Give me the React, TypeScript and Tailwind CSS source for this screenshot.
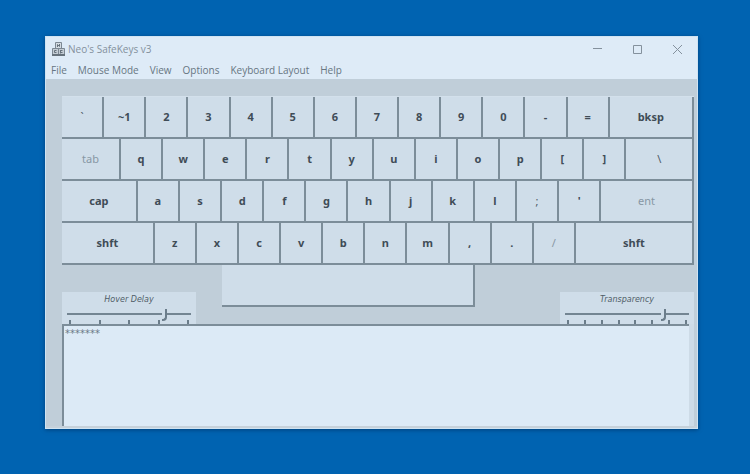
import { useState } from "react";
import { clsx } from "clsx";

type KeyDef = { label: string; units?: number; tone?: "bold" | "regular" | "faded" };

const ROW_UNITS = 15;

const plain = (labels: string): KeyDef[] => labels.split(" ").map((label) => ({ label }));

const rows: KeyDef[][] = [
  [{ label: "`", tone: "regular" }, ...plain("~1 2 3 4 5 6 7 8 9 0 - ="), { label: "bksp", units: 2 }],
  [
    { label: "tab", units: 1.4, tone: "faded" },
    ...plain("q w e r t y u i o p [ ]"),
    { label: "\\", units: 1.6, tone: "regular" },
  ],
  [
    { label: "cap", units: 1.8 },
    ...plain("a s d f g h j k l"),
    { label: ";", tone: "regular" },
    { label: "'" },
    { label: "ent", units: 2.2, tone: "faded" },
  ],
  [
    { label: "shft", units: 2.2 },
    ...plain("z x c v b n m , ."),
    { label: "/", tone: "faded" },
    { label: "shft", units: 2.8 },
  ],
];

const menus = ["File", "Mouse Mode", "View", "Options", "Keyboard Layout", "Help"];

function Key({ label, units = 1, tone = "bold", onPress }: KeyDef & { onPress: () => void }) {
  return (
    <button
      type="button"
      aria-label={label === " " ? "space" : undefined}
      onClick={onPress}
      style={{ width: `${(units / ROW_UNITS) * 100}%` }}
      className={clsx(
        "h-[42px] min-w-0 border-r-2 border-b-2 border-[#7c8d99] bg-[#cfdde9] text-[11px] leading-4",
        tone === "bold" && "font-bold text-[#3f4c57]",
        tone === "regular" && "text-[#4d5b67]",
        tone === "faded" && "text-[#8797a4]",
      )}
    >
      {label}
    </button>
  );
}

function SliderPanel({ id, label, ticks, value }: { id: string; label: string; ticks: number; value: number }) {
  return (
    <div className="flex h-8 w-[134px] shrink-0 flex-col bg-[#cfdde9]">
      <label
        htmlFor={id}
        className="h-4 text-center font-['DejaVu_Sans','Liberation_Sans',sans-serif] text-[8px] leading-4 text-[#4f5d68] italic"
      >
        {label}
      </label>
      <input
        id={id}
        type="range"
        defaultValue={value}
        className="mx-[5px] h-3 appearance-none bg-transparent [&::-webkit-slider-runnable-track]:h-[2px] [&::-webkit-slider-runnable-track]:bg-[#738592] [&::-webkit-slider-thumb]:-mt-1 [&::-webkit-slider-thumb]:h-3 [&::-webkit-slider-thumb]:w-[5px] [&::-webkit-slider-thumb]:appearance-none [&::-webkit-slider-thumb]:rounded-br [&::-webkit-slider-thumb]:border-r-2 [&::-webkit-slider-thumb]:border-b-2 [&::-webkit-slider-thumb]:border-[#6b7d8b] [&::-webkit-slider-thumb]:bg-[#cfdde9]"
      />
      <div className="flex h-1 justify-between px-[7px]">
        {Array.from({ length: ticks }, (_, i) => (
          <span key={i} className="w-[2px] bg-[#6b7d8a]" />
        ))}
      </div>
    </div>
  );
}

function AppIcon() {
  return (
    <svg viewBox="0 0 15 14" className="h-[14px] w-[15px]" fill="none" stroke="#7c8893" aria-hidden="true">
      <path d="M4.500 .5h6v6h-6z" fill="#d3dbe2" />
      <path d="M1.500 6.500h6v6h-6zM7.500 6.500h6v6h-6z" fill="#c3ccd4" />
      <path d="M1 13h13" stroke="#66727c" strokeWidth="2" />
      <path d="M6.500 5v-2.500l2 2v-2.500M5.500 8.500H3.500v2h2M9.500 8v3.500M11.500 8.500h-2M11.500 10.500h-2" stroke="#66727c" />
    </svg>
  );
}

export default function App() {
  const [text, setText] = useState("*******");
  const press = () => setText((t) => t + "*");

  return (
    <div className="min-h-screen bg-[#0063b1] pt-9 pr-[52px] pb-[44px] pl-[45px] font-['Noto_Sans','Open_Sans',sans-serif]">
      <main className="border border-[#cfe3f2] bg-[#c0ced9] shadow-[0_1px_4px_#00407a]">
        <header className="bg-[#deebf7] font-['Open_Sans','Noto_Sans',sans-serif]">
          <div className="flex h-6 items-center pl-[5px] text-[#84919d]">
            <AppIcon />
            <h1 className="ml-[2px] text-[10px] leading-6">Neo's SafeKeys v3</h1>
            <div className="ml-auto flex">
              <button type="button" aria-label="Minimize" className="flex w-10 justify-center">
                <svg viewBox="0 0 9 9" className="size-[9px]" stroke="currentColor" fill="none">
                  <path d="M0 3.500h9" />
                </svg>
              </button>
              <button type="button" aria-label="Maximize" className="flex w-10 justify-center">
                <svg viewBox="0 0 9 9" className="size-[9px]" stroke="currentColor" fill="none">
                  <path d="M.5.5h8v8h-8z" />
                </svg>
              </button>
              <button type="button" aria-label="Close" className="flex w-10 justify-center">
                <svg viewBox="0 0 9 9" className="size-[9px]" stroke="currentColor" fill="none">
                  <path d="m0 0 9 9M9 0 0 9" />
                </svg>
              </button>
            </div>
          </div>
          <nav className="flex h-[18px] gap-[11px] pl-[5px] text-[10px] leading-[18px] text-[#677682]">
            {menus.map((menu) => (
              <button key={menu} type="button">
                {menu}
              </button>
            ))}
          </nav>
        </header>

        <div className="pt-[17px] pr-[3px] pl-4">
          <div className="border-t border-[#d3e0eb]">
            {rows.map((row, r) => (
              <div key={r} className="flex">
                {row.map((key, k) => (
                  <Key key={k} {...key} onPress={press} />
                ))}
              </div>
            ))}
          </div>

          <div className="flex h-[59px]">
            <div className="flex grow-[3.8] basis-0 items-end">
              <SliderPanel id="hover-delay" label="Hover Delay" ticks={5} value={80} />
            </div>
            <Key label=" " units={6} onPress={press} />
            <div className="flex grow-[5.2] basis-0 items-end justify-end">
              <SliderPanel id="transparency" label="Transparency" ticks={8} value={81} />
            </div>
          </div>

          <div className="flex bg-[#cddbe7]">
            <textarea
              aria-label="Typed text"
              value={text}
              onChange={(e) => setText(e.target.value)}
              className="mr-[5px] block h-[102px] w-full resize-none border-t-2 border-l-2 border-[#7c8d99] bg-[#dceaf6] px-px py-0 font-['DejaVu_Sans','Liberation_Sans',sans-serif] text-[10px] leading-4 text-[#6a7985] outline-none"
            />
          </div>
        </div>
        <footer className="h-[2px] bg-[#c6d1da]" />
      </main>
    </div>
  );
}
